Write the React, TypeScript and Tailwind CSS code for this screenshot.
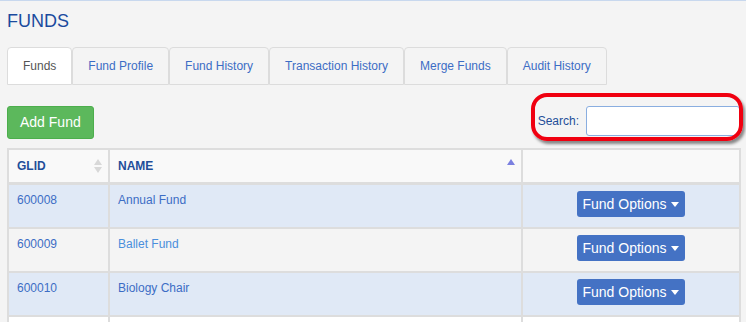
import React from 'react';

const tabs = ['Funds', 'Fund Profile', 'Fund History', 'Transaction History', 'Merge Funds', 'Audit History'];

const funds = [
  { glid: '600008', name: 'Annual Fund', bg: 'bg-[#e0e9f6]', nameColor: 'text-[#3c6dc5]' },
  { glid: '600009', name: 'Ballet Fund', bg: 'bg-[#f4f4f4]', nameColor: 'text-[#4a8fdc]' },
  { glid: '600010', name: 'Biology Chair', bg: 'bg-[#e0e9f6]', nameColor: 'text-[#3c6dc5]' },
];

const SortIcon = ({ up, down }: { up: string; down: string }) => (
  <svg width="8" height="14" viewBox="0 0 8 14">
    <path d="M4 0 L8 6 L0 6 Z" fill={up} />
    <path d="M0 8 L8 8 L4 14 Z" fill={down} />
  </svg>
);

const FundOptions = () => (
  <button className="inline-flex h-[26px] items-center rounded-[3px] bg-[#4472c4] pl-[5px] pr-[6px] text-[14px] leading-none text-white">
    Fund Options
    <svg className="ml-[4px] mt-[1px]" width="8" height="5" viewBox="0 0 8 5">
      <path d="M0 0 L8 0 L4 5 Z" fill="#ffffff" />
    </svg>
  </button>
);

export default function App() {
  return (
    <div className="min-h-[322px] overflow-hidden border-t border-[#c8d8ee] bg-[#f4f4f4] font-['Liberation_Sans',Arial,sans-serif]">
      <div className="pl-[7px] pr-[5px]">
        <h1 className="pt-[10px] text-[18px] leading-[20px] text-[#1a4b9e]">FUNDS</h1>

        {/* tabs */}
        <div className="mt-[16px] flex">
          {tabs.map((t, i) => (
            <div
              key={t}
              className={`flex h-[38px] items-center rounded-t-[4px] border border-[#dcdcdc] px-[15px] text-[12px] ${
                i === 0 ? 'bg-white text-[#555555]' : 'bg-[#f4f4f4] text-[#3c6dc5]'
              }`}
            >
              {t}
            </div>
          ))}
        </div>

        {/* toolbar */}
        <div className="mt-[21px] flex items-start justify-between">
          <button className="h-[33px] rounded-[3px] border border-[#4cae4c] bg-[#5cb85c] px-[12px] text-[14px] text-white">
            Add Fund
          </button>
          <div className="relative mr-[1px] flex h-[30px] items-center gap-[7px]">
            <span className="text-[12px] text-[#1f4e99]">Search:</span>
            <input className="h-[30px] w-[154px] rounded-[3px] border border-[#8aaee0] bg-white outline-none" />
            <div className="pointer-events-none absolute -bottom-[5px] -left-[7px] -right-[3px] -top-[13px] rounded-[16px] border-[4px] border-[#f00010] shadow-[2px_3px_3px_rgba(0,0,0,0.45)]" />
          </div>
        </div>

        {/* table */}
        <div className="mt-[9px] w-[734px] border-r-2 border-t-2 border-[#dddddd]">
          <div className="flex h-[35px] border-b-[3px] border-[#dddddd] bg-[#f9f9f9] text-[12px] font-bold text-[#1f4e99]">
            <div className="flex w-[101px] items-center justify-between border-l-2 border-[#dddddd] pl-[8px] pr-[6px]">
              GLID
              <SortIcon up="#d8d8d8" down="#d8d8d8" />
            </div>
            <div className="flex w-[413px] items-center justify-between border-l-2 border-[#dddddd] pl-[8px] pr-[6px]">
              NAME
              <SortIcon up="#7b80e0" down="transparent" />
            </div>
            <div className="flex-1 border-l-2 border-[#dddddd]" />
          </div>

          {funds.map((f) => (
            <div key={f.glid} className={`flex h-[44px] border-b-2 border-[#dddddd] text-[12px] ${f.bg}`}>
              <div className="w-[101px] border-l-2 border-[#dddddd] pl-[8px] pt-[8px] leading-[15px] text-[#3c6dc5]">
                {f.glid}
              </div>
              <div className={`w-[413px] border-l-2 border-[#dddddd] pl-[8px] pt-[8px] leading-[15px] ${f.nameColor}`}>
                {f.name}
              </div>
              <div className="flex flex-1 justify-center border-l-2 border-[#dddddd] pt-[6px]">
                <FundOptions />
              </div>
            </div>
          ))}
          <div className="flex h-[10px] bg-white">
            <div className="w-[101px] border-l-2 border-[#dddddd]" />
            <div className="w-[413px] border-l-2 border-[#dddddd]" />
            <div className="flex-1 border-l-2 border-[#dddddd]" />
          </div>
        </div>
      </div>
    </div>
  );
}
